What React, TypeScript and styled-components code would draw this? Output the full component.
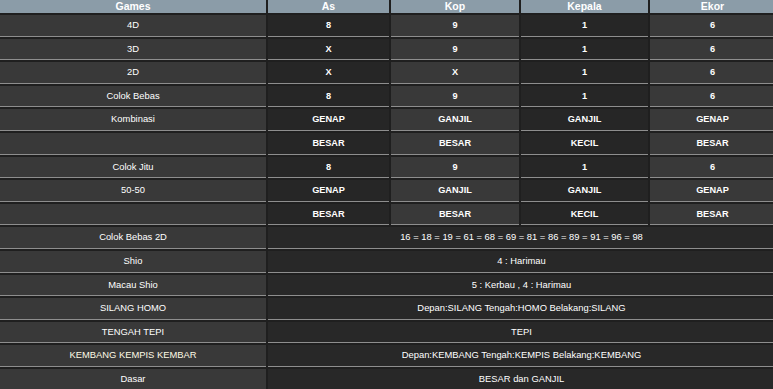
import React from "react";
import styled, { createGlobalStyle } from "styled-components";

const Global = createGlobalStyle`
  html, body { margin: 0; padding: 0; background: #1f1f1f; }
  body { font-family: "Liberation Sans", Arial, sans-serif; }
`;

const Wrap = styled.div`
  width: 773px;
  height: 389px;
  overflow: hidden;
  background: #1f1f1f;
`;

const Table = styled.table`
  border-collapse: separate;
  border-spacing: 2px 2px;
  margin: -2px 0 0 -2px;
  width: 777px;
  table-layout: fixed;
`;

const Head = styled.th`
  background: #8b9ca8;
  color: #ffffff;
  font-weight: bold;
  font-size: 10.5px;
  height: 13px;
  line-height: 13px;
  padding: 0;
  text-align: center;
`;

const Cell = styled.td<{ $tone: "light" | "dark" | "merged"; $bold?: boolean; $warm?: boolean }>`
  background: ${(p) => (p.$tone === "light" ? "#393939" : p.$tone === "dark" ? "#262626" : "#282828")};
  color: ${(p) => (p.$warm ? "#fffbe6" : "#ffffff")};
  font-weight: ${(p) => (p.$bold ? "bold" : "normal")};
  font-size: ${(p) => (p.$bold ? "9.2px" : "9.4px")};
  line-height: 12.6px;
  padding: 4px 0;
  border-bottom: 1px solid #8e8e8e;
  text-align: center;
  white-space: nowrap;
`;

type Row = { game: string; vals: string[]; warm?: boolean };

const gridRows: Row[] = [
  { game: "4D", vals: ["8", "9", "1", "6"] },
  { game: "3D", vals: ["X", "9", "1", "6"] },
  { game: "2D", vals: ["X", "X", "1", "6"] },
  { game: "Colok Bebas", vals: ["8", "9", "1", "6"] },
  { game: "Kombinasi", vals: ["GENAP", "GANJIL", "GANJIL", "GENAP"] },
  { game: "", vals: ["BESAR", "BESAR", "KECIL", "BESAR"] },
  { game: "Colok Jitu", vals: ["8", "9", "1", "6"] },
  { game: "50-50", vals: ["GENAP", "GANJIL", "GANJIL", "GENAP"] },
  { game: "", vals: ["BESAR", "BESAR", "KECIL", "BESAR"] },
];

const mergedRows: Row[] = [
  { game: "Colok Bebas 2D", vals: ["16 = 18 = 19 = 61 = 68 = 69 = 81 = 86 = 89 = 91 = 96 = 98"] },
  { game: "Shio", vals: ["4 : Harimau"] },
  { game: "Macau Shio", vals: ["5 : Kerbau , 4 : Harimau"] },
  { game: "SILANG HOMO", vals: ["Depan:SILANG Tengah:HOMO Belakang:SILANG"] },
  { game: "TENGAH TEPI", vals: ["TEPI"] },
  { game: "KEMBANG KEMPIS KEMBAR", vals: ["Depan:KEMBANG Tengah:KEMPIS Belakang:KEMBANG"], warm: true },
  { game: "Dasar", vals: ["BESAR dan GANJIL"] },
];

const tones: ("light" | "dark")[] = ["dark", "light", "dark", "light"];

export default function App() {
  return (
    <Wrap>
      <Global />
      <Table>
        <colgroup>
          <col style={{ width: 266 }} />
          <col style={{ width: 121 }} />
          <col style={{ width: 128 }} />
          <col style={{ width: 127 }} />
          <col style={{ width: 125 }} />
        </colgroup>
        <thead>
          <tr>
            <Head>Games</Head>
            <Head>As</Head>
            <Head>Kop</Head>
            <Head>Kepala</Head>
            <Head>Ekor</Head>
          </tr>
        </thead>
        <tbody>
          {gridRows.map((r, i) => (
            <tr key={`g${i}`}>
              <Cell $tone="light">{r.game}</Cell>
              {r.vals.map((v, j) => (
                <Cell key={j} $tone={tones[j]} $bold>
                  {v}
                </Cell>
              ))}
            </tr>
          ))}
          {mergedRows.map((r, i) => (
            <tr key={`m${i}`}>
              <Cell $tone="light" $warm={r.warm}>{r.game}</Cell>
              <Cell $tone="merged" colSpan={4}>
                {r.vals[0]}
              </Cell>
            </tr>
          ))}
        </tbody>
      </Table>
    </Wrap>
  );
}
